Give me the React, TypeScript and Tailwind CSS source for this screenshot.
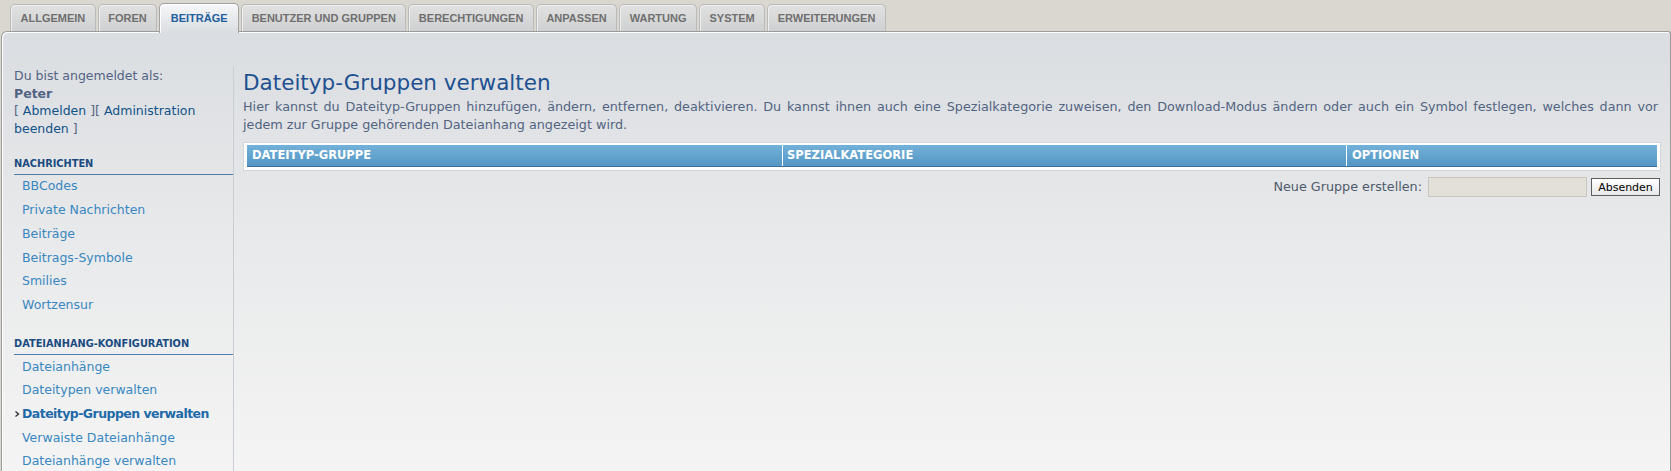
import React from 'react'

const tabs = [
  'ALLGEMEIN',
  'FOREN',
  'BEITRÄGE',
  'BENUTZER UND GRUPPEN',
  'BERECHTIGUNGEN',
  'ANPASSEN',
  'WARTUNG',
  'SYSTEM',
  'ERWEITERUNGEN',
]

const sections = [
  {
    title: 'NACHRICHTEN',
    items: ['BBCodes', 'Private Nachrichten', 'Beiträge', 'Beitrags-Symbole', 'Smilies', 'Wortzensur'],
  },
  {
    title: 'DATEIANHANG-KONFIGURATION',
    items: [
      'Dateianhänge',
      'Dateitypen verwalten',
      'Dateityp-Gruppen verwalten',
      'Verwaiste Dateianhänge',
      'Dateianhänge verwalten',
    ],
  },
]

const activeItem = 'Dateityp-Gruppen verwalten'

export default function App() {
  return (
    <div
      className="w-[1671px] h-[471px] overflow-hidden bg-[#dad7d0]"
      style={{ fontFamily: '"DejaVu Sans", Verdana, sans-serif' }}
    >
      {/* Tab strip */}
      <div className="flex items-end gap-[2px] h-[31px] pl-[10px]">
        {tabs.map((tab) =>
          tab === 'BEITRÄGE' ? (
            <div
              key={tab}
              className="relative z-10 -mb-[2px] h-[30px] px-[10.5px] flex items-center rounded-t-[5px] border border-b-0 border-[#a2a2a2] bg-gradient-to-b from-[#f6f7f8] to-[#dadde1] shadow-[inset_1px_1px_0_#fff] text-[11px] font-bold text-[#22609e]"
              style={{ fontFamily: '"Liberation Sans", Arial, sans-serif' }}
            >
              <span className="-mt-[1px]">{tab}</span>
            </div>
          ) : (
            <div
              key={tab}
              className="h-[27px] px-[9.5px] flex items-center rounded-t-[5px] border border-b-0 border-[#bababa] bg-gradient-to-b from-[#e1e1e1] to-[#cfd0d1] shadow-[inset_1px_1px_0_#eeeeee] text-[11px] font-bold text-[#6f6f6f]"
              style={{ fontFamily: '"Liberation Sans", Arial, sans-serif' }}
            >
              {tab}
            </div>
          )
        )}
      </div>

      {/* Panel */}
      <div className="ml-[1px] h-[440px] flex rounded-tl-[6px] rounded-tr-[3px] border border-b-0 border-[#9b9b9b] bg-gradient-to-b from-[#dadde1] via-[#e9eaeb] to-[#f4f4f4] shadow-[inset_1px_1px_0_#ffffff]">
        {/* Sidebar */}
        <div className="mt-[35px] w-[232px] shrink-0 pl-[12px] border-r border-[#c9ced4] text-[12.5px] text-[#536482]">
          <div className="leading-[17.5px]">
            <div>Du bist angemeldet als:</div>
            <div className="font-bold">Peter</div>
            <div>
              [ <span className="text-[#105289]">Abmelden</span> ][{' '}
              <span className="text-[#105289]">Administration</span>
              <br />
              <span className="text-[#105289]">beenden</span> ]
            </div>
          </div>

          {sections.map((section, i) => (
            <div key={section.title} className={i === 0 ? 'mt-[20px]' : 'mt-[20px]'}>
              <div className="pb-[3px] border-b border-[#4f7eab] text-[9.8px] leading-[14px] font-bold text-[#1a4b80]">
                {section.title}
              </div>
              <ul>
                {section.items.map((item) =>
                  item === activeItem && i === 1 ? (
                    <li
                      key={item}
                      className="h-[23.7px] flex items-center text-[#1f6aa8] font-bold tracking-[-0.55px]"
                    >
                      <svg width="8" height="24" viewBox="0 0 8 24" className="shrink-0">
                        <path d="M1.5 9.5 L4.5 12 L1.5 14.5" fill="none" stroke="#333" strokeWidth="1.4" />
                      </svg>
                      {item}
                    </li>
                  ) : (
                    <li key={item} className="h-[23.7px] flex items-center pl-[8px] text-[#3887c1]">
                      {item}
                    </li>
                  )
                )}
              </ul>
            </div>
          ))}
        </div>

        {/* Main content */}
        <div className="flex-1 mt-[38px] pl-[9px] pr-[9px]">
          <h1 className="text-[21.5px] leading-[26px] text-[#1f5190]">Dateityp-Gruppen verwalten</h1>
          <div className="mt-[2px] text-[12.75px] leading-[18px] text-[#536482] whitespace-nowrap">
            <p className="text-justify [text-align-last:justify] pr-[3px]">
              Hier kannst du Dateityp-Gruppen hinzufügen, ändern, entfernen, deaktivieren. Du kannst ihnen auch eine
              Spezialkategorie zuweisen, den Download-Modus ändern oder auch ein Symbol festlegen, welches dann vor
            </p>
            <p>jedem zur Gruppe gehörenden Dateianhang angezeigt wird.</p>
          </div>

          {/* Table */}
          <div className="mt-[8px] border border-[#d2d5d9] bg-white pt-[2px] px-[3px] pb-[3px]">
            <div className="grid grid-cols-[535px_564px_1fr] h-[22px] bg-gradient-to-b from-[#72b1d9] to-[#5496c4] border-b border-[#3f6f98] text-[11.5px] font-bold text-white">
              <div className="flex items-center pl-[5px]">DATEITYP-GRUPPE</div>
              <div className="flex items-center pl-[4px] border-l border-white">SPEZIALKATEGORIE</div>
              <div className="flex items-center pl-[5px] border-l border-white">OPTIONEN</div>
            </div>
          </div>

          {/* Create group */}
          <div className="mt-[6px] flex items-center justify-end pr-[1px]">
            <span className="text-[12.75px] text-[#4e5a6b]">Neue Gruppe erstellen:</span>
            <input
              type="text"
              className="ml-[6px] w-[159px] h-[20px] border border-[#cbc6bd] bg-[#e3e0da] outline-none"
            />
            <button className="ml-[4px] w-[69px] h-[18px] border border-[#5d5d5d] bg-gradient-to-b from-white to-[#e8e8e8] text-[11px] leading-none text-black">
              Absenden
            </button>
          </div>
        </div>
      </div>
    </div>
  )
}
